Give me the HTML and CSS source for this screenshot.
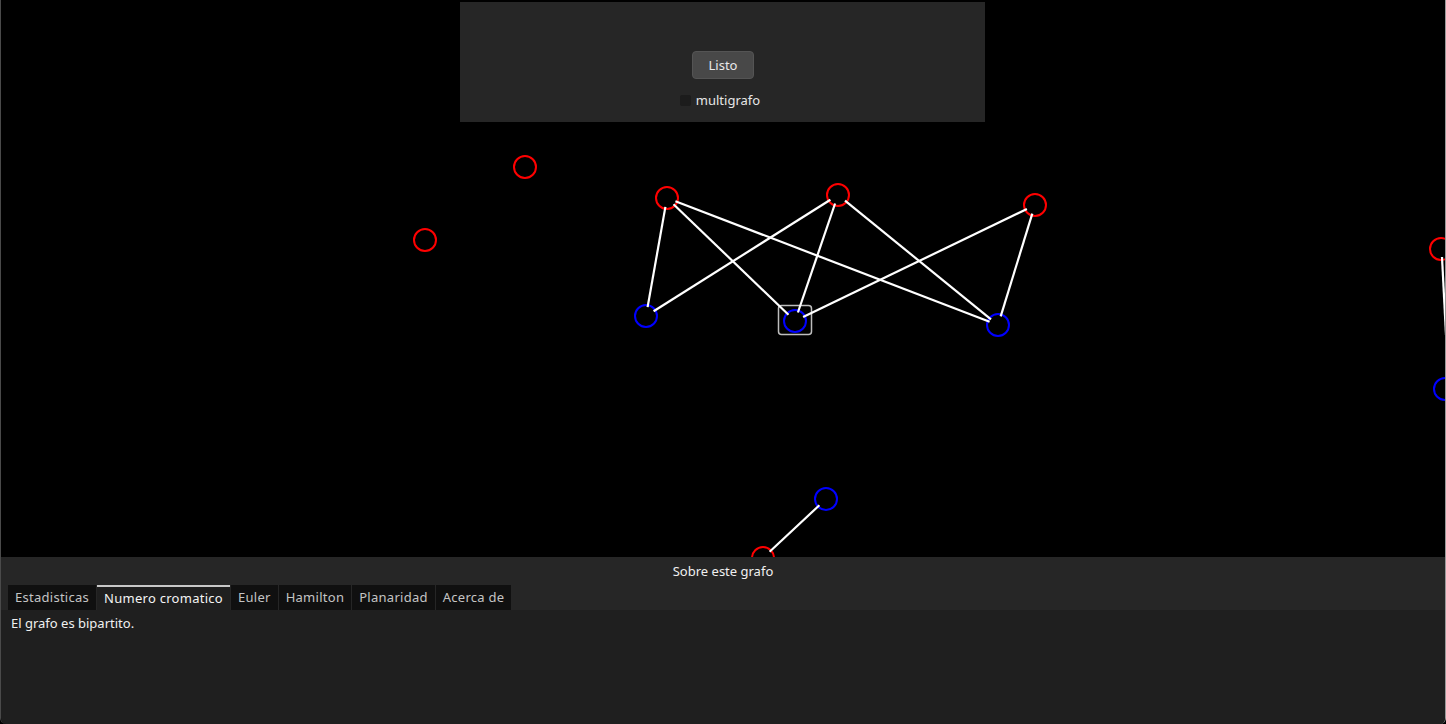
FILE: index.html
```html
<!DOCTYPE html>
<html lang="es">
<head>
<meta charset="utf-8">
<title>Grafo</title>
<link rel="stylesheet" href="styles.css">
</head>
<body>
<div class="window">
  <div class="canvas">
    <svg class="graph" width="1446" height="557" viewBox="0 0 1446 557">
      <g class="nodes-red" fill="none" stroke="#ff0000" stroke-width="2">
        <circle cx="525" cy="167" r="11"/>
        <circle cx="425" cy="240" r="11"/>
        <circle cx="667" cy="198" r="11"/>
        <circle cx="838" cy="195" r="11"/>
        <circle cx="1035" cy="205" r="11"/>
        <circle cx="1441" cy="249" r="11"/>
        <circle cx="763" cy="558" r="11"/>
      </g>
      <g class="nodes-blue" fill="none" stroke="#0000ff" stroke-width="2">
        <circle cx="646" cy="316" r="11"/>
        <circle cx="795" cy="321" r="11"/>
        <circle cx="998" cy="325" r="11"/>
        <circle cx="1445" cy="389" r="11"/>
        <circle cx="826" cy="499" r="11"/>
      </g>
      <rect x="778.5" y="305.5" width="33" height="29" rx="3" fill="none" stroke="#bdbdbd" stroke-width="1.5"/>
      <g class="edges" stroke="#ffffff" stroke-width="2.2" stroke-linecap="butt">
        <line x1="665.4" y1="206.9" x2="647.6" y2="307.1"/>
        <line x1="673.5" y1="204.2" x2="788.5" y2="314.8"/>
        <line x1="675.4" y1="201.2" x2="989.6" y2="321.8"/>
        <line x1="830.4" y1="199.8" x2="653.6" y2="311.2"/>
        <line x1="835.1" y1="203.5" x2="797.9" y2="312.5"/>
        <line x1="845" y1="200.7" x2="991" y2="319.3"/>
        <line x1="1026.9" y1="208.9" x2="803.1" y2="317.1"/>
        <line x1="1032.3" y1="213.6" x2="1000.7" y2="316.4"/>
        <line x1="1442" y1="257" x2="1446" y2="335"/>
        <line x1="819.4" y1="505.2" x2="769.6" y2="551.8"/>
      </g>
    </svg>
    <div class="top-panel">
      <button class="btn">Listo</button>
      <label class="check"><span class="box"></span><span>multigrafo</span></label>
    </div>
  </div>
  <div class="info">
    <div class="info-title">Sobre este grafo</div>
    <div class="tabs">
      <div class="tab">Estadisticas</div>
      <div class="tab active">Numero cromatico</div>
      <div class="tab">Euler</div>
      <div class="tab">Hamilton</div>
      <div class="tab">Planaridad</div>
      <div class="tab">Acerca de</div>
    </div>
    <div class="content">El grafo es bipartito.</div>
  </div>
</div>
</body>
</html>
```
FILE: styles.css
```css
html, body {
  margin: 0;
  padding: 0;
  background: #000;
  width: 1446px;
  height: 724px;
  overflow: hidden;
  font-family: "Noto Sans", "Open Sans", sans-serif;
  font-size: 13px;
}

.window {
  width: 1446px;
  height: 724px;
  box-sizing: border-box;
  border-left: 1px solid #4a4a4a;
  border-right: 1px solid #9a9a9a;
  border-bottom-left-radius: 6px;
  border-bottom-right-radius: 6px;
  display: flex;
  flex-direction: column;
  overflow: hidden;
  background: #000;
}

.canvas {
  position: relative;
  height: 557px;
  flex: none;
  overflow: hidden;
}

.graph {
  position: absolute;
  left: -1px;
  top: 0;
}

.top-panel {
  position: absolute;
  left: 459px;
  top: 2px;
  width: 525px;
  height: 120px;
  background: #262626;
  display: flex;
  flex-direction: column;
  align-items: center;
  padding-top: 49px;
  box-sizing: border-box;
}

.btn {
  width: 62px;
  height: 28px;
  background: #484848;
  border: 1px solid #545454;
  border-radius: 4px;
  color: #e8e8e8;
  font-family: inherit;
  font-size: 13px;
  padding: 0;
  margin-left: 1px;
}

.check {
  display: flex;
  align-items: center;
  gap: 5px;
  margin-top: 13px;
  color: #e6e6e6;
  font-size: 13px;
  line-height: 16px;
  margin-left: -5px;
}

.box {
  width: 11px;
  height: 11px;
  background: #1c1c1c;
  border-radius: 2px;
}

.info {
  flex: 1;
  display: flex;
  flex-direction: column;
  background: #1f1f1f;
}

.info-title {
  background: #262626;
  height: 28px;
  line-height: 28px;
  text-align: center;
  color: #f0f0f0;
  font-size: 13px;
}

.tabs {
  background: #262626;
  display: flex;
  gap: 1px;
  padding-left: 7px;
  height: 25px;
}

.tab {
  background: #101010;
  color: #c4c4c4;
  height: 25px;
  line-height: 25px;
  padding: 0 7px;
  font-size: 13px;
  letter-spacing: 0.27px;
  box-sizing: border-box;
}

.tab.active {
  background: #1f1f1f;
  color: #f4f4f4;
  border-top: 2px solid #c8c8c8;
  line-height: 23px;
}

.content {
  color: #f0f0f0;
  padding: 4px 10px;
  font-size: 13px;
  line-height: 18px;
}
```
